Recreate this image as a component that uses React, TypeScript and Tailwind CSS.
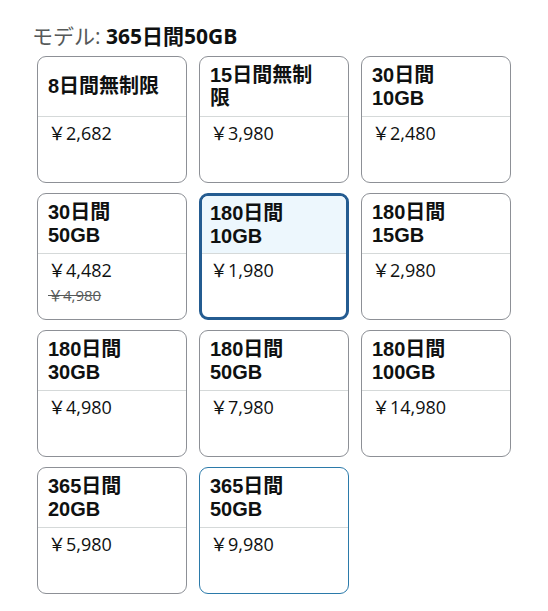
import React from "react";

type Plan = {
  lines: string[];
  price: string;
  listPrice?: string;
  state?: "selected" | "hover";
};

const plans: Plan[] = [
  { lines: ["8日間無制限"], price: "￥2,682" },
  { lines: ["15日間無制", "限"], price: "￥3,980" },
  { lines: ["30日間", "10GB"], price: "￥2,480" },
  { lines: ["30日間", "50GB"], price: "￥4,482", listPrice: "￥4,980" },
  { lines: ["180日間", "10GB"], price: "￥1,980", state: "selected" },
  { lines: ["180日間", "15GB"], price: "￥2,980" },
  { lines: ["180日間", "30GB"], price: "￥4,980" },
  { lines: ["180日間", "50GB"], price: "￥7,980" },
  { lines: ["180日間", "100GB"], price: "￥14,980" },
  { lines: ["365日間", "20GB"], price: "￥5,980" },
  { lines: ["365日間", "50GB"], price: "￥9,980", state: "hover" },
];

function PlanTile({ plan }: { plan: Plan }) {
  const selected = plan.state === "selected";
  const hover = plan.state === "hover";

  return (
    <div
      className={
        selected
          ? "h-[127px] rounded-[9px] border-[3px] border-[#245c91] overflow-hidden bg-white"
          : hover
            ? "h-[127px] rounded-[9px] border border-[#2b7aaa] overflow-hidden bg-white"
            : "h-[127px] rounded-[9px] border border-[#8d9096] overflow-hidden bg-white"
      }
    >
      {/* title */}
      <div
        className={
          selected
            ? "h-[58px] flex items-center px-[8px] border-b border-[#d5d9d9] bg-[#edf7fd]"
            : "h-[60px] flex items-center px-[10px] border-b border-[#d5d9d9]"
        }
      >
        <div className="font-['Liberation_Sans','Noto_Sans_CJK_JP',sans-serif] text-[20px] leading-[23px] font-bold text-[#0f1111] whitespace-nowrap">
          {plan.lines[0]}
          {plan.lines[1] && (
            <>
              <br />
              {plan.lines[1]}
            </>
          )}
        </div>
      </div>

      {/* price */}
      <div className={selected ? "px-[8px] pt-[4px]" : "px-[10px] pt-[4px]"}>
        <div className="text-[18px] leading-[24px] text-[#0f1111]">{plan.price}</div>
        {plan.listPrice && (
          <div className="mt-[3px] text-[15px] leading-[20px] text-[#565959] line-through">
            {plan.listPrice}
          </div>
        )}
      </div>
    </div>
  );
}

export default function App() {
  return (
    <div
      className="min-h-screen bg-white pt-[24px] pl-[32px]"
      style={{ fontFamily: '"Open Sans", "Noto Sans CJK JP", sans-serif' }}
    >
      <div className="text-[21px] leading-[24px]">
        <span className="text-[#565959]">モデル: </span>
        <span className="font-bold text-[#0f1111]">365日間50GB</span>
      </div>

      <div className="mt-[8px] ml-[5px] grid grid-cols-[repeat(3,150px)] gap-x-[12px] gap-y-[10px]">
        {plans.map((p, i) => (
          <PlanTile key={i} plan={p} />
        ))}
      </div>
    </div>
  );
}
